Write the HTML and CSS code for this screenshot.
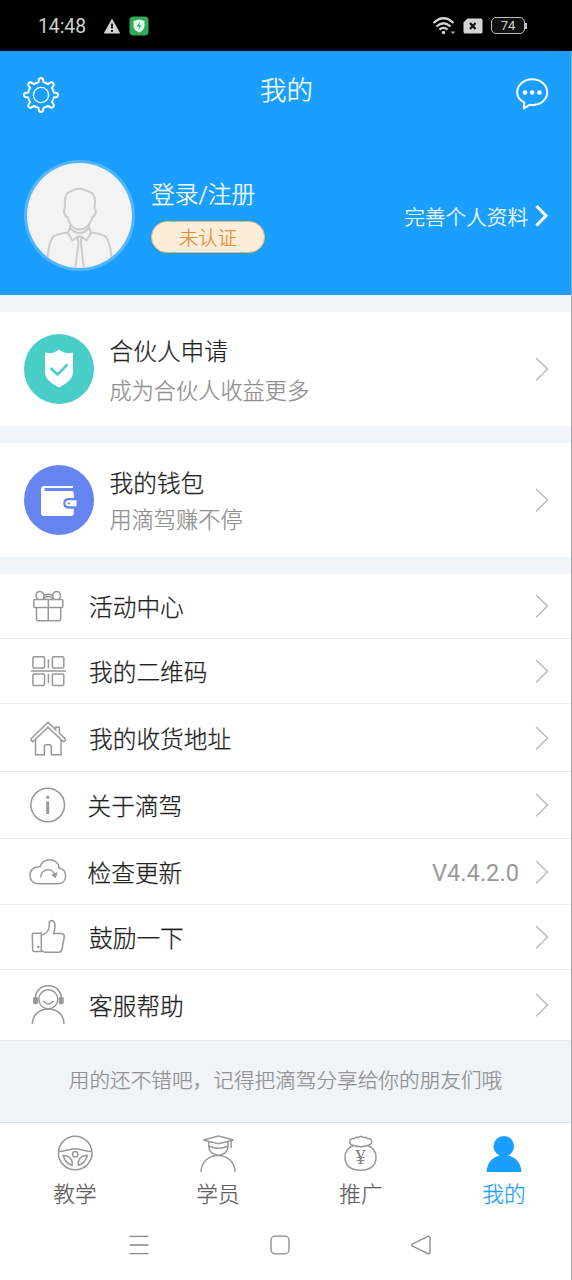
FILE: index.html
```html
<!DOCTYPE html>
<html lang="zh-CN">
<head>
<meta charset="utf-8">
<title>我的</title>
<link rel="stylesheet" href="styles.css">
</head>
<body>
<div class="screen">
  <div class="status">
    <span class="time">14:48</span>
    <svg class="warn" width="18" height="16" viewBox="0 0 18 16"><path d="M9 .5L17.3 15.5H.7Z" fill="#d4d4d4"/><path d="M9 5.5V10.5M9 12V14" stroke="#111" stroke-width="1.8"/></svg>
    <svg class="guard" width="20" height="20" viewBox="0 0 20 20"><rect x=".5" y=".5" width="19" height="19" rx="4" fill="#32a95b"/><path d="M10 3.5L15.5 5V10Q15 14.5 10 16.500Q5 14.500 4.500 10V5Z" fill="#e2ffe8"/><path d="M11 6L7.500 10.500H10L9.300 14L12.500 9.300H10.300Z" fill="#32a95b"/></svg>
    <span class="status-right">
      <svg width="24" height="20" viewBox="0 0 24 20"><g fill="none" stroke="#d4d4d4" stroke-width="2.300"><path d="M1.500 7Q11.500 -2.500 21.500 7"/><path d="M4.500 10.500Q11.500 4 18.500 10.500"/><path d="M7.500 13.700Q11.500 10 15.500 13.700"/></g><circle cx="11.500" cy="16.500" r="1.700" fill="#d4d4d4"/><path d="M18.500 15.500H23.500L21 18Z" fill="#aaa"/></svg>
      <svg class="sim" width="20" height="16" viewBox="0 0 20 16"><path d="M4.500 .5H18Q19.500 .5 19.500 2V14Q19.500 15.500 18 15.500H2Q.5 15.500 .5 14V4.500Z" fill="#d4d4d4"/><path d="M7 5L12.500 11M12.500 5L7 11" stroke="#111" stroke-width="2.200"/></svg>
      <span class="battery">74</span><i class="battery-tip"></i>
    </span>
  </div>

  <header class="hero">
    <div class="bar">
      <svg width="40" height="40" viewBox="0 0 40 40" fill="none" stroke="#fff" stroke-width="2" stroke-linejoin="round"><path d="M18.100 5Q20 2.800 21.900 5L22.600 8.200Q25 8.700 27 10.100L29.800 8.300Q33 8 32.700 11.200L30.900 14Q32.300 16 32.800 18.400L36 19.100Q38.200 21 36 22.900L32.800 23.600Q32.300 26 30.900 28L32.700 30.800Q33 34 29.800 33.700L27 31.900Q25 33.300 22.600 33.800L21.900 37Q20 39.200 18.100 37L17.400 33.800Q15 33.300 13 31.900L10.200 33.700Q7 34 7.300 30.800L9.100 28Q7.700 26 7.200 23.600L4 22.900Q1.800 21 4 19.100L7.200 18.400Q7.700 16 9.100 14L7.300 11.200Q7 8 10.200 8.300L13 10.100Q15 8.700 17.400 8.200Z"/><circle cx="20" cy="21" r="7.600" stroke-width="1.400"/></svg>
      <h1>我的</h1>
      <svg width="40" height="40" viewBox="0 0 40 40"><path d="M12.300 28.500C7.500 26 5.200 22.500 5.200 18.500C5.200 10.800 12 5.300 20.200 5.300S35.200 10.800 35.200 18.300S28.500 31 20.200 31L17.500 30.800L11.800 34.500Z" fill="none" stroke="#fff" stroke-width="2" stroke-linejoin="round"/><g fill="#fff"><circle cx="13" cy="18.500" r="2.300"/><circle cx="20.200" cy="18.500" r="2.300"/><circle cx="27.400" cy="18.500" r="2.300"/></g></svg>
    </div>
    <div class="profile">
      <svg class="avatar" width="111" height="111" viewBox="0 0 111 111"><defs><clipPath id="face"><circle cx="55.500" cy="55.500" r="52.500"/></clipPath></defs><circle cx="55.500" cy="55.500" r="55.500" fill="#53b5fa"/><circle cx="55.500" cy="55.500" r="52.500" fill="#f3f3f3"/><g clip-path="url(#face)" fill="none" stroke="#ccc" stroke-width="2" stroke-linejoin="round"><path d="M41 48.500C40 35 43 31.500 48 31Q54.500 27 62 30.500C69 32 72.500 36 70.500 48.500C73 50 71.500 56 68.500 57C67 63.500 62 69.500 55.500 69.500S45 63.500 43.500 57C40 56 39 50 41 48.500Z"/><path d="M46 65V68Q55.500 78 65 68V65M45.500 68L44 73L48.500 80.500L53.500 76.500M65.500 68L67 73L62.500 80.500L57.500 76.500M44 72.500Q33 74 29.500 76.500Q25 81 23.500 98M67 72.500Q78 74 81.500 76.500Q86 81 87.500 98M53.500 76.500L54.500 83L51 110M57.500 76.500L57 83L60 110M53.500 76.500H57.500"/></g></svg>
      <div class="who"><div class="login">登录/注册</div><span class="badge">未认证</span></div>
      <div class="complete">完善个人资料</div>
      <svg width="14" height="24" viewBox="0 0 14 24"><path d="M1.500 2L11 11.700L1.500 21.500" fill="none" stroke="#fff" stroke-width="3"/></svg>
    </div>
  </header>

  <section class="card">
    <svg width="70" height="70" viewBox="0 0 70 70"><circle cx="35" cy="35" r="35" fill="#49cdc7"/><path d="M21 18.500Q28 20 31 18Q34 16 35 16Q36.500 16 39 18Q42 20 49 18.500V38C49 45.500 41 50.500 35 53.500C29 50.500 21 45.500 21 38Z" fill="#fff"/><path d="M26.500 34L33.500 40.500L43.500 30.500" fill="none" stroke="#49cdc7" stroke-width="2.500"/></svg>
    <div class="card-text"><h2>合伙人申请</h2><p>成为合伙人收益更多</p></div>
    <svg class="chev" width="14" height="26" viewBox="0 0 14 26"><path d="M1 2L12.500 13L1 24.500"/></svg>
  </section>

  <section class="card">
    <svg width="70" height="70" viewBox="0 0 70 70"><circle cx="35" cy="35" r="35" fill="#6685f1"/><path d="M20.500 21H49V23H21.500Q20.300 23 20.300 24.500Q20.300 26 22 26H47.500Q49.800 26 49.800 28.500V33H45Q39.300 33 39.300 38.300T45 43.700H49.800V48Q49.800 51 47 51H20Q17 51 17 48V24Q17 21 20.500 21Z" fill="#fff"/><path d="M52.500 35.300H44.800Q41.500 35.300 41.500 38.300T44.800 41.300H52.500Z" fill="#fff"/><circle cx="44.800" cy="38.300" r="1.100" fill="#6685f1"/></svg>
    <div class="card-text near"><h2>我的钱包</h2><p>用滴驾赚不停</p></div>
    <svg class="chev" width="14" height="26" viewBox="0 0 14 26"><path d="M1 2L12.500 13L1 24.500"/></svg>
  </section>

  <ul class="menu">
    <li class="row r1"><svg class="ico" viewBox="0 0 40 40"><rect x="5.800" y="13.500" width="29" height="8" rx="1"/><path d="M8.500 21.500V33.500Q8.500 34.700 9.700 34.700H31.500Q32.700 34.700 32.700 33.500V21.500M20.300 13.500V34.700M9.500 13C7 10.500 7.500 5.500 12 5.500C15.500 5.500 17 9 15.500 13M31 13C33.500 10.500 33 5.500 28.500 5.500C25 5.500 23.500 9 25.500 13M16 9.500Q20.300 7.200 24.500 9.500M15.500 13Q17 10.500 20.300 10.500T25.500 13"/></svg><span>活动中心</span><svg class="chev" width="14" height="26" viewBox="0 0 14 26"><path d="M1 2L12.500 13L1 24.500"/></svg></li>
    <li class="row r2"><svg class="ico" viewBox="0 0 40 40"><rect x="4.900" y="5.700" width="11.600" height="11.400" rx="1"/><rect x="24.400" y="5.700" width="11.400" height="11.400" rx="1"/><rect x="4.900" y="22.900" width="11.600" height="11.600" rx="1"/><rect x="24.400" y="22.900" width="11.400" height="11.600" rx="1"/><path d="M3 20H38M20.400 8.300V17.300M20.400 22.700V32.300"/></svg><span>我的二维码</span><svg class="chev" width="14" height="26" viewBox="0 0 14 26"><path d="M1 2L12.500 13L1 24.500"/></svg></li>
    <li class="row r3"><svg class="ico" viewBox="0 0 40 40"><path d="M20 4.200L3 20.800Q2.700 22.500 4.700 23.800L20 9.200L35.500 23.800Q37.700 23 37.500 21.200L31.300 15V9.200H27.700V11.700ZM7.500 21.500V36.700H16.400V28.500Q16.400 26.700 18 26.700H21.700Q23.300 26.700 23.300 28.500V36.700H33V21.500"/></svg><span>我的收货地址</span><svg class="chev" width="14" height="26" viewBox="0 0 14 26"><path d="M1 2L12.500 13L1 24.500"/></svg></li>
    <li class="row r4"><svg class="ico" viewBox="0 0 40 40"><circle cx="19.700" cy="20" r="16.800"/><circle cx="19.700" cy="12.200" r="1.600" fill="#999" stroke="none"/><path d="M19.700 16.500V29" stroke-width="3"/></svg><span>关于滴驾</span><svg class="chev" width="14" height="26" viewBox="0 0 14 26"><path d="M1 2L12.500 13L1 24.500"/></svg></li>
    <li class="row r5"><svg class="ico" viewBox="0 0 40 40"><path d="M10.500 31.700C5 31.700 1.900 28 1.900 23.500C1.900 18 6 14.200 12 14.700C13 10.500 17 7.700 21.500 7.700C26.500 7.700 31 11 31 15.900C35 16.500 37.600 19.500 37.600 23.700C37.600 28.500 34.500 31.700 30 31.700Z"/><path d="M12.700 25.500C13 15.500 25.500 15.500 27 23.500"/><path d="M24.500 23L28.500 21.300L27.500 25Z" fill="#999"/></svg><span>检查更新</span><em>V4.4.2.0</em><svg class="chev" width="14" height="26" viewBox="0 0 14 26"><path d="M1 2L12.500 13L1 24.500"/></svg></li>
    <li class="row r6"><svg class="ico" viewBox="0 0 40 40"><path d="M4.300 17.500Q4.300 16.200 5.600 16.200H13.300V34.600H6Q4.800 34.600 4.700 33.300Z"/><circle cx="10.200" cy="30" r="1.300" fill="#999" stroke="none"/><path d="M13.500 18.300Q20.500 16 21.200 9.500V5.700Q21.500 3.500 23.500 3.500C26 3.500 27.200 6 27 9.500Q26.800 14 25.500 16.500H33.500Q36.600 16.800 36.300 20L34 32Q33.300 35.300 30.300 35.300H17.500Q15.500 35.300 13.500 33.500"/></svg><span>鼓励一下</span><svg class="chev" width="14" height="26" viewBox="0 0 14 26"><path d="M1 2L12.500 13L1 24.500"/></svg></li>
    <li class="row r7"><svg class="ico" viewBox="0 0 40 40"><circle cx="20.300" cy="14.300" r="9.500"/><path d="M7.300 13C7.800 5.500 13 .8 20.300 .8S32.800 5.500 33.500 13M15.200 16Q20.300 22 25.500 16M4.300 39C4.600 30 11 24 20.300 24S35.800 30 36 39"/><rect x="5.800" y="12.500" width="3.500" height="6" rx="1" fill="#999"/><rect x="31.500" y="12.500" width="3.500" height="6" rx="1" fill="#999"/></svg><span>客服帮助</span><svg class="chev" width="14" height="26" viewBox="0 0 14 26"><path d="M1 2L12.500 13L1 24.500"/></svg></li>
  </ul>

  <p class="share">用的还不错吧，记得把滴驾分享给你的朋友们哦</p>

  <nav class="tabs">
    <a class="tab"><svg class="ico" viewBox="0 0 40 40"><circle cx="20.200" cy="20" r="16.800"/><path d="M3.300 18.500C9 19 13 15.700 20.200 15.700S31 19 37 18.500"/><circle cx="20.200" cy="21.300" r="2.700"/><path d="M8 22.500Q15 22 17.200 29L17 32.300Q10.500 30.500 8 22.500ZM32.400 22.500Q25.400 22 23.200 29L23.400 32.300Q29.900 30.500 32.400 22.500Z"/></svg><span>教学</span></a>
    <a class="tab"><svg class="ico" viewBox="0 0 40 40"><path d="M5.300 7L20.500 3L35.500 7L20.500 10.700ZM33.200 8V15M10.800 9V13C10.800 25.300 30 25.300 30 13V9M11 13Q20.500 17.500 30 13M2.900 39C3.300 29 10.500 22.500 20 22.500S36.800 29 37.100 39"/></svg><span>学员</span></a>
    <a class="tab"><svg class="ico" viewBox="0 0 40 40"><path d="M12.500 12.500C6.500 14.500 4 19 4 24.500C4 33 10.500 37.200 19.500 37.200S35 33 35 24.500C35 19 32.500 14.500 26.500 12.500M12.500 12.500C7 11.500 7.500 4.500 13.500 5.500Q15.500 3.700 17 4.700Q19.500 2 22.500 4.700Q24.500 3.700 26 5.500C32 4.500 32.500 11.500 26.500 12.500Q19.500 14.800 12.500 12.500Z"/><text class="yen" x="19.500" y="31.300">¥</text></svg><span>推广</span></a>
    <a class="tab active"><svg class="ico" viewBox="0 0 40 40"><circle cx="19.800" cy="13.200" r="10.300"/><path d="M2.500 39C3 30 8 24.500 15 22.500H24.600C32 24.500 37 30 37.500 39Z"/></svg><span>我的</span></a>
  </nav>

  <div class="sysnav">
    <svg viewBox="0 0 20 20"><path d="M.5 1.300H19.500M.5 10H19.500M.5 18.700H19.500"/></svg>
    <svg viewBox="0 0 20 20"><rect x="1" y="1.200" width="18" height="17.600" rx="4"/></svg>
    <svg viewBox="0 0 20 20"><path d="M1.300 9L17 1.400Q19 .8 19 2.800V17.200Q19 19.200 17 18.600L1.300 11Q.3 10 1.300 9Z"/></svg>
  </div>
</div>
</body>
</html>
```

FILE: styles.css
```css
* { box-sizing: border-box; margin: 0; padding: 0; }
body { background: #fff; font-family: Roboto, "Noto Sans CJK SC", sans-serif; font-weight: 300; color: #222; -webkit-text-stroke: .25px; }
svg { display: block; flex: none; }
h1, h2 { font-weight: 300; }

.screen { width: 572px; height: 1280px; overflow: hidden; display: flex; flex-direction: column; background: #fff; box-shadow: inset -1px 0 #a5a8aa; }
.screen > * { flex: none; margin-right: 1px; }

.status { height: 51px; margin-right: 0; background: #000; display: flex; align-items: center; padding: 0 45px 0 38px; color: #d0d0d0; font-weight: 400; -webkit-text-stroke: 0; }
.time { font-size: 19.300px; line-height: 24px; width: 65px; padding-top: 2px; }
.guard { margin-left: 8px; }
.status-right { margin-left: auto; display: flex; align-items: center; }
.sim { margin-left: 7px; }
.battery { margin-left: 8px; width: 34px; height: 17px; border: 1.500px solid #bbb; border-radius: 5px; font-size: 13px; line-height: 15px; text-align: center; background: #111; }
.battery-tip { width: 2px; height: 6px; background: #bbb; }

.hero { height: 244px; background: #1b9fff; color: #fff; }
.bar { display: flex; justify-content: space-between; align-items: flex-start; height: 73px; padding: 23px 19px 0 21px; }
.bar h1 { font-size: 26.500px; line-height: 40px; margin-top: -3px; }
.profile { display: flex; align-items: flex-start; padding: 36px 22px 0 24px; }
.who { margin-left: 16px; padding-top: 18px; }
.login { font-size: 23.700px; line-height: 34px; }
.badge { display: block; width: 114px; height: 32px; margin-top: 9px; padding-top: 2px; border: 1px solid #e9b878; border-radius: 16px; background: #fdeed7; color: #e98a3a; font-size: 19.300px; line-height: 30px; text-align: center; }
.complete { margin: 42px 7px 0 auto; font-size: 20.600px; line-height: 32px; }
.complete + svg { margin-top: 44px; }

.hero + .card { margin-top: 17px; }
.card { height: 114px; margin-bottom: 17px; padding: 0 22px 0 24px; background: #fff; display: flex; align-items: center; box-shadow: 0 -17px #eff4f8, 0 17px #eff4f8; }
.card-text { margin-left: 15.500px; padding-top: 4px; flex: 1; }
.card h2 { font-size: 23.700px; line-height: 34px; }
.card p { font-size: 22.200px; line-height: 34px; margin-top: 5px; color: #909090; }
.card .near p { margin-top: 2px; }
.chev { fill: none; stroke: #bbb; stroke-width: 1.500; }

.menu { list-style: none; }
.row { display: flex; align-items: center; height: 65px; padding: 0 22px 0 28px; border-bottom: 1px solid #e8eaec; font-size: 23.700px; line-height: 34px; }
.row > span { margin: 4px auto 0 21px; }
.r3 { height: 68px; }
.r4 { height: 67px; }
.r4 > span, .r5 > span { margin-left: 19.500px; }
.r5 { height: 66px; }
.r7 { height: 71px; }
.row em { font-style: normal; font-weight: 400; color: #999; margin-right: 16px; padding-top: 2px; -webkit-text-stroke: 0; }
.ico { width: 40px; height: 40px; fill: none; stroke: #999; stroke-width: 1.500; overflow: visible; }

.share { height: 82px; padding-top: 1px; background: #eff4f8; border-bottom: 1px solid #dfe3e6; color: #909090; font-size: 20.650px; line-height: 79px; text-align: center; }

.tabs { height: 90px; padding-left: 3.500px; display: grid; grid-template-columns: repeat(4, 143px); }
.tab { display: flex; flex-direction: column; align-items: center; padding-top: 10px; font-size: 21.700px; line-height: 30px; color: #606060; }
.tab span { margin-top: 7px; }
.yen { font-family: "Liberation Serif", serif; font-weight: 400; font-size: 21px; text-anchor: middle; fill: #888; stroke: none; }
.active { color: #1b9fff; }
.active .ico { fill: #1b9fff; stroke: none; }

.sysnav { height: 66px; display: flex; gap: 121px; padding: 22px 0 0 129px; }
.sysnav svg { width: 20px; height: 20px; fill: none; stroke: #888; stroke-width: 1.300; }
```
